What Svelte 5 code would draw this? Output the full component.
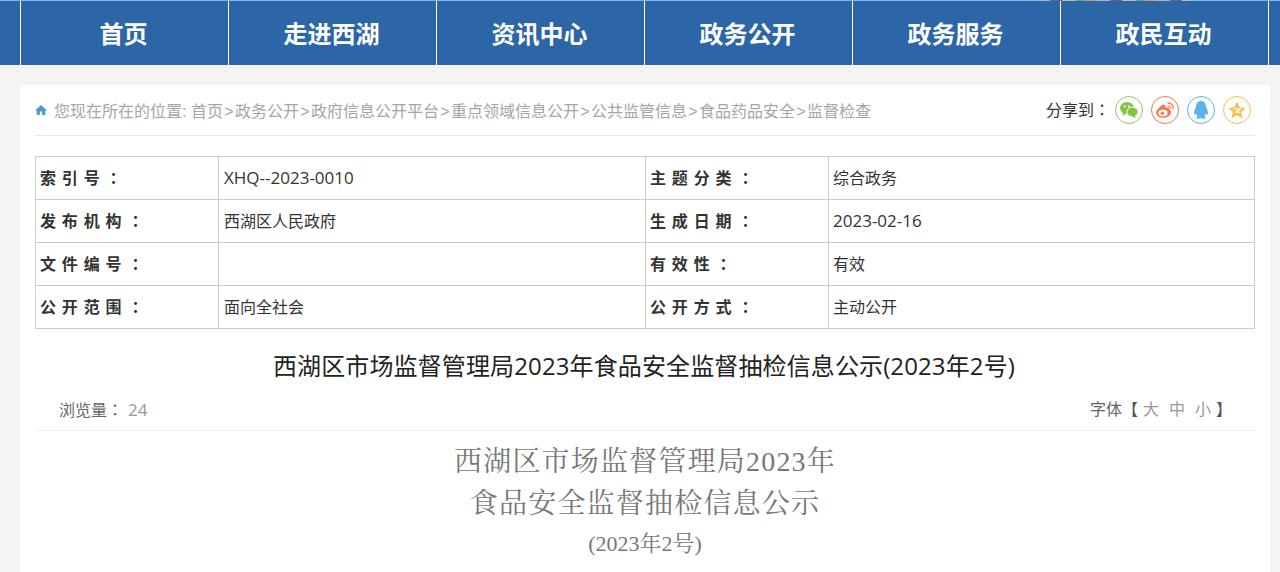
<script>
  const nav = ["首页", "走进西湖", "资讯中心", "政务公开", "政务服务", "政民互动"];
  const crumbs = ["首页", "政务公开", "政府信息公开平台", "重点领域信息公开", "公共监管信息", "食品药品安全", "监督检查"];
  const rows = [
    ["索 引 号", "XHQ--2023-0010", "主 题 分 类", "综合政务"],
    ["发 布 机 构", "西湖区人民政府", "生 成 日 期", "2023-02-16"],
    ["文 件 编 号", "", "有 效 性", "有效"],
    ["公 开 范 围", "面向全社会", "公 开 方 式", "主动公开"]
  ];
  const isLatin = (s) => /^[\x20-\x7e]+$/.test(s);
</script>

<header class="nav">
  <div class="strip"></div>
  <ul>
    {#each nav as item}
      <li>{item}</li>
    {/each}
  </ul>
</header>

<main class="card">
  <div class="crumbbar">
    <div class="crumbs">
      <svg class="home" viewBox="0 0 12 12" width="12" height="12">
        <path d="M6 1 L12 6.6 H10.3 V11 H7.2 V7.6 H4.8 V11 H1.7 V6.6 H0 Z" fill="#4a9ad0" />
      </svg>
      <span>您现在所在的位置: {#each crumbs as c, i}{c}{#if i < crumbs.length - 1}<span class="sep">&gt;</span>{/if}{/each}</span>
    </div>
    <div class="share">
      <span class="share-label">分享到<span class="colon">：</span></span>
      <span class="ico wechat">
        <svg viewBox="0 0 20 20" width="20" height="20">
          <ellipse cx="8" cy="8" rx="7" ry="6" fill="#82c341" />
          <path d="M4 12 L3.5 16 L8 13 Z" fill="#82c341" />
          <ellipse cx="13.5" cy="12" rx="5.6" ry="4.8" fill="#82c341" stroke="#fff" stroke-width="1" />
          <path d="M15.5 15.5 L17 18 L13 16.5 Z" fill="#82c341" />
          <circle cx="5.8" cy="6.6" r="1" fill="#fff" />
          <circle cx="10" cy="6.6" r="1" fill="#fff" />
        </svg>
      </span>
      <span class="ico weibo">
        <svg viewBox="0 0 20 20" width="20" height="20">
          <ellipse cx="8.5" cy="12.5" rx="7.5" ry="5.2" fill="#f5794f" />
          <path d="M3 10 C4 6 8 4 10 5 C11 6 10 8 11 8 C13 7 15 8 14 10 Z" fill="#f5794f" />
          <ellipse cx="8" cy="13" rx="4.6" ry="3.2" fill="#fff" />
          <circle cx="7.4" cy="13.2" r="1.8" fill="#f5794f" />
          <path d="M12.5 3 A5 5 0 0 1 18 9" fill="none" stroke="#f5794f" stroke-width="1.5" />
          <path d="M12.8 6 A2.4 2.4 0 0 1 15.5 8.6" fill="none" stroke="#f5794f" stroke-width="1.2" />
        </svg>
      </span>
      <span class="ico qq">
        <svg viewBox="0 0 20 20" width="20" height="20">
          <path d="M10 1 C14 1 15.2 4.5 15.2 7.5 C16.5 10 17.5 12.5 16.6 14.6 C16 15.2 15.3 14.4 14.8 13.6 C14.6 15 14 16 13.4 16.6 C14.6 17 15 17.6 14.6 18.2 C13.8 19 11.4 18.8 10 18 C8.6 18.8 6.2 19 5.4 18.2 C5 17.6 5.4 17 6.6 16.6 C6 16 5.4 15 5.2 13.6 C4.7 14.4 4 15.2 3.4 14.6 C2.5 12.5 3.5 10 4.8 7.5 C4.8 4.5 6 1 10 1 Z" fill="#5cb4e8" />
        </svg>
      </span>
      <span class="ico qzone">
        <svg viewBox="0 0 20 20" width="20" height="20">
          <path d="M10 1.5 L12.6 7.2 L18.8 7.9 L14.2 12 L15.5 18.2 L10 15 L4.5 18.2 L5.8 12 L1.2 7.9 L7.4 7.2 Z" fill="#fbbd4c" />
          <path d="M6.8 8.8 H13.2 L8.6 12.2 H13.4" fill="none" stroke="#fff" stroke-width="1.2" />
        </svg>
      </span>
    </div>
  </div>

  <table class="meta">
    <tbody>
      {#each rows as r}
        <tr>
          <th class="k1">{r[0]} <span class="colon">：</span></th>
          <td class="v1" class:latin={isLatin(r[1])}>{r[1]}</td>
          <th class="k2">{r[2]} <span class="colon">：</span></th>
          <td class="v2" class:latin={isLatin(r[3])}>{r[3]}</td>
        </tr>
      {/each}
    </tbody>
  </table>

  <h1>西湖区市场监督管理局2023年食品安全监督抽检信息公示(2023年2号)</h1>

  <div class="infobar">
    <div class="views">浏览量<span class="colon">：</span><span class="num">24</span></div>
    <div class="fontsize">字体<b>【</b><span>大</span><span>中</span><span>小</span><b>】</b></div>
  </div>

  <article>
    <p class="t1">西湖区市场监督管理局2023年</p>
    <p class="t1">食品安全监督抽检信息公示</p>
    <p class="t2">(2023年2号)</p>
  </article>
</main>

<style>
  :global(body) {
    margin: 0;
    background: #f4f4f4;
    font-family: "Open Sans", "Noto Sans CJK SC", sans-serif;
    height: 572px;
    overflow: hidden;
  }

  .nav {
    height: 64px;
    background: #2c66a6;
    border-top: 1px solid #7db8ea;
    position: relative;
  }
  /* clipped banner image just above the nav */
  .strip {
    position: absolute;
    top: -1px;
    left: 1036px;
    width: 154px;
    height: 1px;
    background: repeating-linear-gradient(90deg, #a8b4c4 0 14px, #6d5f86 14px 26px, #c9b9a8 26px 40px, #5fa58c 40px 48px, #cf9a62 48px 60px);
  }
  .nav ul {
    list-style: none;
    margin: 0;
    padding: 0 0 0 20px;
    display: flex;
  }
  .nav li {
    width: 205px;
    padding-right: 2px;
    height: 64px;
    line-height: 65px;
    border-left: 1px solid #fff;
    text-align: center;
    color: #fff;
    font-size: 24px;
    font-weight: bold;
  }
  .nav li:last-child {
    border-right: 1px solid #fff;
  }

  .card {
    margin: 20px 10px 0 20px;
    background: #fff;
    padding: 0 15px;
    height: 490px;
  }

  .crumbbar {
    height: 50px;
    border-bottom: 1px solid #e8e8e8;
    display: flex;
    justify-content: space-between;
    align-items: center;
  }
  .crumbs {
    font-size: 16px;
    color: #a5a5a5;
    display: flex;
    align-items: center;
    white-space: pre;
    font-family: "Liberation Sans", "Noto Sans CJK SC", sans-serif;
    padding-bottom: 1px;
  }
  .home {
    margin-right: 7px;
    margin-top: 1px;
  }
  .sep {
    display: inline-block;
    width: 12px;
    text-align: center;
  }
  .share {
    display: flex;
    align-items: center;
    gap: 8px;
    margin-right: 4px;
  }
  .share-label {
    font-size: 16px;
    color: #333;
    margin-right: -3px;
    line-height: 24px;
    padding-bottom: 2px;
  }
  /* vertically centred full-width colon, as in the reference font */
  .colon {
    font-family: "Noto Sans CJK TC", sans-serif;
  }
  .ico {
    width: 26px;
    height: 26px;
    border: 1px solid;
    border-radius: 50%;
    display: flex;
    align-items: center;
    justify-content: center;
  }
  .wechat { border-color: #8fc95f; }
  .weibo { border-color: #f5794f; }
  .qq { border-color: #5cb4e8; }
  .qzone { border-color: #fbbd4c; }

  .meta {
    margin-top: 20px;
    width: 1220px;
    border-collapse: collapse;
    table-layout: fixed;
    font-size: 16px;
    color: #333;
  }
  .meta th, .meta td {
    border: 1px solid #ccc;
    height: 42px;
    padding: 0 5px 2px 5px;
    text-align: left;
    box-sizing: border-box;
  }
  .meta td.latin {
    font-size: 17px;
  }
  .meta tr {
    height: 43px;
  }
  .meta th {
    font-weight: bold;
    letter-spacing: 0.7px;
    font-family: "Liberation Sans", "Noto Sans CJK SC", sans-serif;
  }
  .k1 { width: 183px; }
  .v1 { width: 427px; }
  .k2 { width: 183px; }
  .meta .k1 { padding-left: 4px; }
  .meta .k2, .meta .v2 { padding-left: 4px; }

  h1 {
    margin: 0;
    padding-right: 2px;
    font-size: 24px;
    font-weight: normal;
    letter-spacing: 0.12px;
    color: #222;
    text-align: center;
    line-height: 74px;
    height: 74px;
  }

  .infobar {
    display: flex;
    justify-content: space-between;
    height: 27px;
    border-bottom: 1px solid #eee;
    font-size: 16px;
    line-height: 12px;
    color: #666;
  }
  .views {
    padding-left: 24px;
  }
  .num {
    color: #999;
    font-size: 17px;
    margin-left: 5px;
  }
  .fontsize {
    padding-right: 23px;
  }
  .fontsize span {
    color: #999;
    margin: 0 5px;
  }
  .fontsize b {
    font-weight: normal;
    color: #555;
  }

  article {
    text-align: center;
    font-family: "Liberation Serif", "Noto Serif CJK SC", "Noto Sans CJK SC", serif;
    color: #777;
    padding-top: 10px;
  }
  article p {
    margin: 0;
  }
  .t1 {
    font-size: 28px;
    line-height: 42px;
    letter-spacing: 1.2px;
  }
  .t2 {
    font-size: 22px;
    line-height: 38px;
  }
</style>
